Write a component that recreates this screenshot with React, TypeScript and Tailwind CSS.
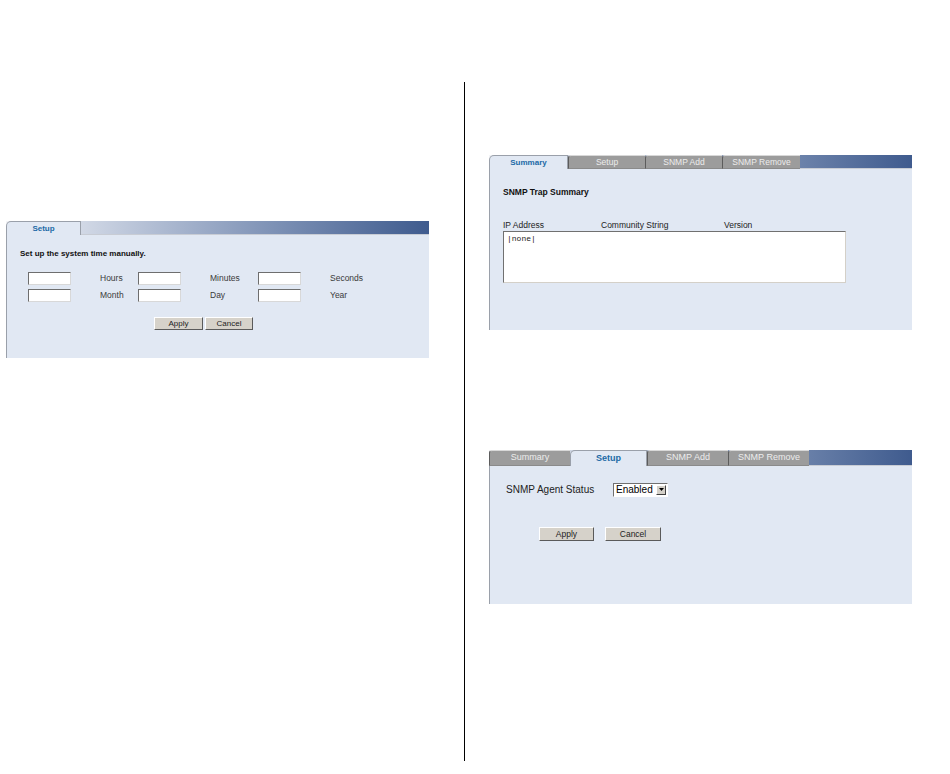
import React from "react";

const font = { fontFamily: '"Liberation Sans", Arial, sans-serif' };

function ActiveTab({ label, w, h, size }: { label: string; w: number; h: number; size: string }) {
  return (
    <div
      className={`flex items-center justify-center rounded-tl-[5px] border-l border-t border-r border-[#9aa0aa] bg-[#e1e8f3] font-bold text-[#1c6aa6] ${size}`}
      style={{ width: w, height: h }}
    >
      {label}
    </div>
  );
}

function InactiveTab({ label, w, h, size }: { label: string; w: number; h: number; size: string }) {
  return (
    <div
      className={`flex items-center justify-center rounded-tl-[3px] border-l border-t border-l-[#5c5c5c] border-t-[#d8d8d8] bg-[#9c9c9c] border-b border-b-[#8a8a8a] text-[#ececec] ${size}`}
      style={{ width: w, height: h }}
    >
      {label}
    </div>
  );
}

function TextBox() {
  return (
    <div className="h-[13px] w-[43px] border-l border-t border-l-[#6e6e6e] border-t-[#6e6e6e] border-r border-b border-r-[#d8d8d8] border-b-[#d8d8d8] bg-white" />
  );
}

function Btn({ label, w, h, size }: { label: string; w: number; h: number; size: string }) {
  return (
    <div
      className={`flex items-center justify-center border-l border-t border-l-white border-t-white border-r border-b border-r-[#5a5a5a] border-b-[#5a5a5a] bg-[#d6d2ca] text-[#222] ${size}`}
      style={{ width: w, height: h }}
    >
      {label}
    </div>
  );
}

export default function App() {
  return (
    <div className="flex h-[774px] w-[950px] bg-white text-black" style={font}>
      {/* Left column */}
      <div className="w-[464px] pl-[6px] pt-[221px]">
        <div className="w-[423px]">
          <div className="flex h-[14px] bg-gradient-to-r from-[#f4f5f8] to-[#3f5b8e]">
            <ActiveTab label="Setup" w={75} h={14} size="text-[8px]" />
            <div className="flex-1 border-b border-[#c8ccd4]" />
          </div>
          <div className="h-[123px] border-l border-[#9aa0aa] bg-[#e1e8f3] pl-[13px] pt-[14px]">
            <div className="text-[8px] font-bold leading-[10px] text-[#111]">Set up the system time manually.</div>
            <div className="ml-[8px] mt-[13px] flex flex-col gap-[4px] text-[8.5px] text-[#3a3a3a]">
              <div className="flex items-center">
                <TextBox />
                <div className="w-[67px] pl-[29px]">Hours</div>
                <TextBox />
                <div className="w-[77px] pl-[29px]">Minutes</div>
                <TextBox />
                <div className="pl-[29px]">Seconds</div>
              </div>
              <div className="flex items-center">
                <TextBox />
                <div className="w-[67px] pl-[29px]">Month</div>
                <TextBox />
                <div className="w-[77px] pl-[29px]">Day</div>
                <TextBox />
                <div className="pl-[29px]">Year</div>
              </div>
            </div>
            <div className="ml-[134px] mt-[15px] flex gap-[2px]">
              <Btn label="Apply" w={49} h={13} size="text-[8px]" />
              <Btn label="Cancel" w={48} h={13} size="text-[8px]" />
            </div>
          </div>
        </div>
      </div>

      {/* Divider */}
      <div className="mt-[82px] h-[679px] w-px bg-black" />

      {/* Right column */}
      <div className="pl-[24px] pt-[155px]">
        {/* Summary panel */}
        <div className="w-[423px]">
          <div className="flex h-[14px] bg-gradient-to-r from-[#f4f5f8] to-[#3f5b8e]">
            <ActiveTab label="Summary" w={79} h={14} size="text-[8px]" />
            <InactiveTab label="Setup" w={77} h={14} size="text-[8.5px]" />
            <InactiveTab label="SNMP Add" w={77} h={14} size="text-[8.5px]" />
            <InactiveTab label="SNMP Remove" w={78} h={14} size="text-[8.5px]" />
            <div className="flex-1 border-b border-[#c8ccd4]" />
          </div>
          <div className="h-[161px] border-l border-[#9aa0aa] bg-[#e1e8f3] pl-[13px] pt-[18px]">
            <div className="text-[8.5px] font-bold leading-[10px] text-[#111]">SNMP Trap Summary</div>
            <div className="mt-[23px] flex text-[8.5px] leading-[10px] text-[#222]">
              <div className="w-[98px]">IP Address</div>
              <div className="w-[123px]">Community String</div>
              <div>Version</div>
            </div>
            <div className="mt-[1px] h-[52px] w-[343px] border-l border-t border-l-[#707070] border-t-[#707070] border-r border-b border-r-[#d4d0c8] border-b-[#d4d0c8] bg-white pl-[3px] pt-[2px]">
              <div className="text-[8px] leading-[10px] text-[#222]" style={{ fontFamily: '"Liberation Mono", "Courier New", monospace' }}>
                |none|
              </div>
            </div>
          </div>
        </div>

        {/* Setup panel */}
        <div className="mt-[120px] w-[423px]">
          <div className="flex h-[16px] bg-gradient-to-r from-[#f4f5f8] to-[#3f5b8e]">
            <InactiveTab label="Summary" w={81} h={16} size="text-[9px]" />
            <ActiveTab label="Setup" w={77} h={16} size="text-[9px]" />
            <InactiveTab label="SNMP Add" w={81} h={16} size="text-[9px]" />
            <InactiveTab label="SNMP Remove" w={81} h={16} size="text-[9px]" />
            <div className="flex-1 border-b border-[#c8ccd4]" />
          </div>
          <div className="h-[138px] border-l border-[#9aa0aa] bg-[#e1e8f3] pl-[16px] pt-[16px]">
            <div className="flex items-center">
              <div className="w-[107px] text-[10px] text-[#222]">SNMP Agent Status</div>
              <div className="flex h-[14px] w-[55px] items-center justify-between border-l border-t border-l-[#707070] border-t-[#707070] border-r border-b border-r-white border-b-white bg-white pl-[2px] pr-[1px]">
                <span className="text-[10px] leading-[12px] text-black">Enabled</span>
                <div className="flex h-[10px] w-[10px] items-center justify-center border-l border-t border-l-white border-t-white border-r border-b border-r-[#404040] border-b-[#404040] bg-[#d4d0c8]">
                  <svg width="5" height="3" viewBox="0 0 5 3">
                    <path d="M0 0 H5 L2.5 3 Z" fill="#000" />
                  </svg>
                </div>
              </div>
            </div>
            <div className="ml-[33px] mt-[30px] flex gap-[11px]">
              <Btn label="Apply" w={55} h={14} size="text-[8.5px]" />
              <Btn label="Cancel" w={56} h={14} size="text-[8.5px]" />
            </div>
          </div>
        </div>
      </div>
    </div>
  );
}
